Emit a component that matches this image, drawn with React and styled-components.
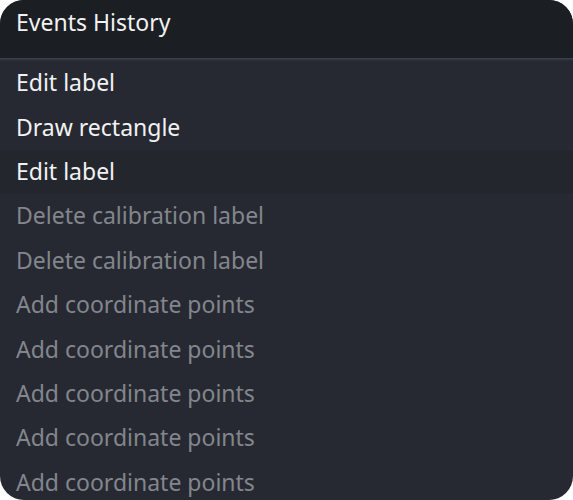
import React from "react";
import styled, { createGlobalStyle } from "styled-components";

const Global = createGlobalStyle`
  html, body { margin: 0; padding: 0; background: #ffffff; }
  body { font-family: "Noto Sans", "Open Sans", sans-serif; }
`;

const Panel = styled.div`
  width: 573px;
  height: 500px;
  border-radius: 24px;
  overflow: hidden;
  background: #262932;
  display: flex;
  flex-direction: column;
`;

const Header = styled.div`
  height: 58px;
  flex: none;
  background: #1b1e23;
  color: #f2f2f2;
  font-size: 23px;
  line-height: 44px;
  padding-left: 16px;
  box-sizing: border-box;
`;

const Divider = styled.div`
  height: 3px;
  flex: none;
  background: linear-gradient(#3a4557, #2d323d 60%, #272a33);
`;

const List = styled.div`
  display: flex;
  flex-direction: column;
`;

const Row = styled.div`
  height: 44.4px;
  box-sizing: border-box;
  padding: 0 0 2px 16px;
  flex: none;
  display: flex;
  align-items: center;
  font-size: 23px;
  color: ${(p) => (p.$done ? "#f2f2f2" : "#83868c")};
  background: ${(p) => (p.$current ? "#23262d" : "transparent")};
`;

const events = [
  { label: "Edit label", done: true },
  { label: "Draw rectangle", done: true },
  { label: "Edit label", done: true, current: true },
  { label: "Delete calibration label" },
  { label: "Delete calibration label" },
  { label: "Add coordinate points" },
  { label: "Add coordinate points" },
  { label: "Add coordinate points" },
  { label: "Add coordinate points" },
  { label: "Add coordinate points" },
];

export default function App() {
  return (
    <>
      <Global />
      <Panel>
        <Header>Events History</Header>
        <Divider />
        <List>
          {events.map((e, i) => (
            <Row key={i} $done={e.done} $current={e.current}>
              {e.label}
            </Row>
          ))}
        </List>
      </Panel>
    </>
  );
}
